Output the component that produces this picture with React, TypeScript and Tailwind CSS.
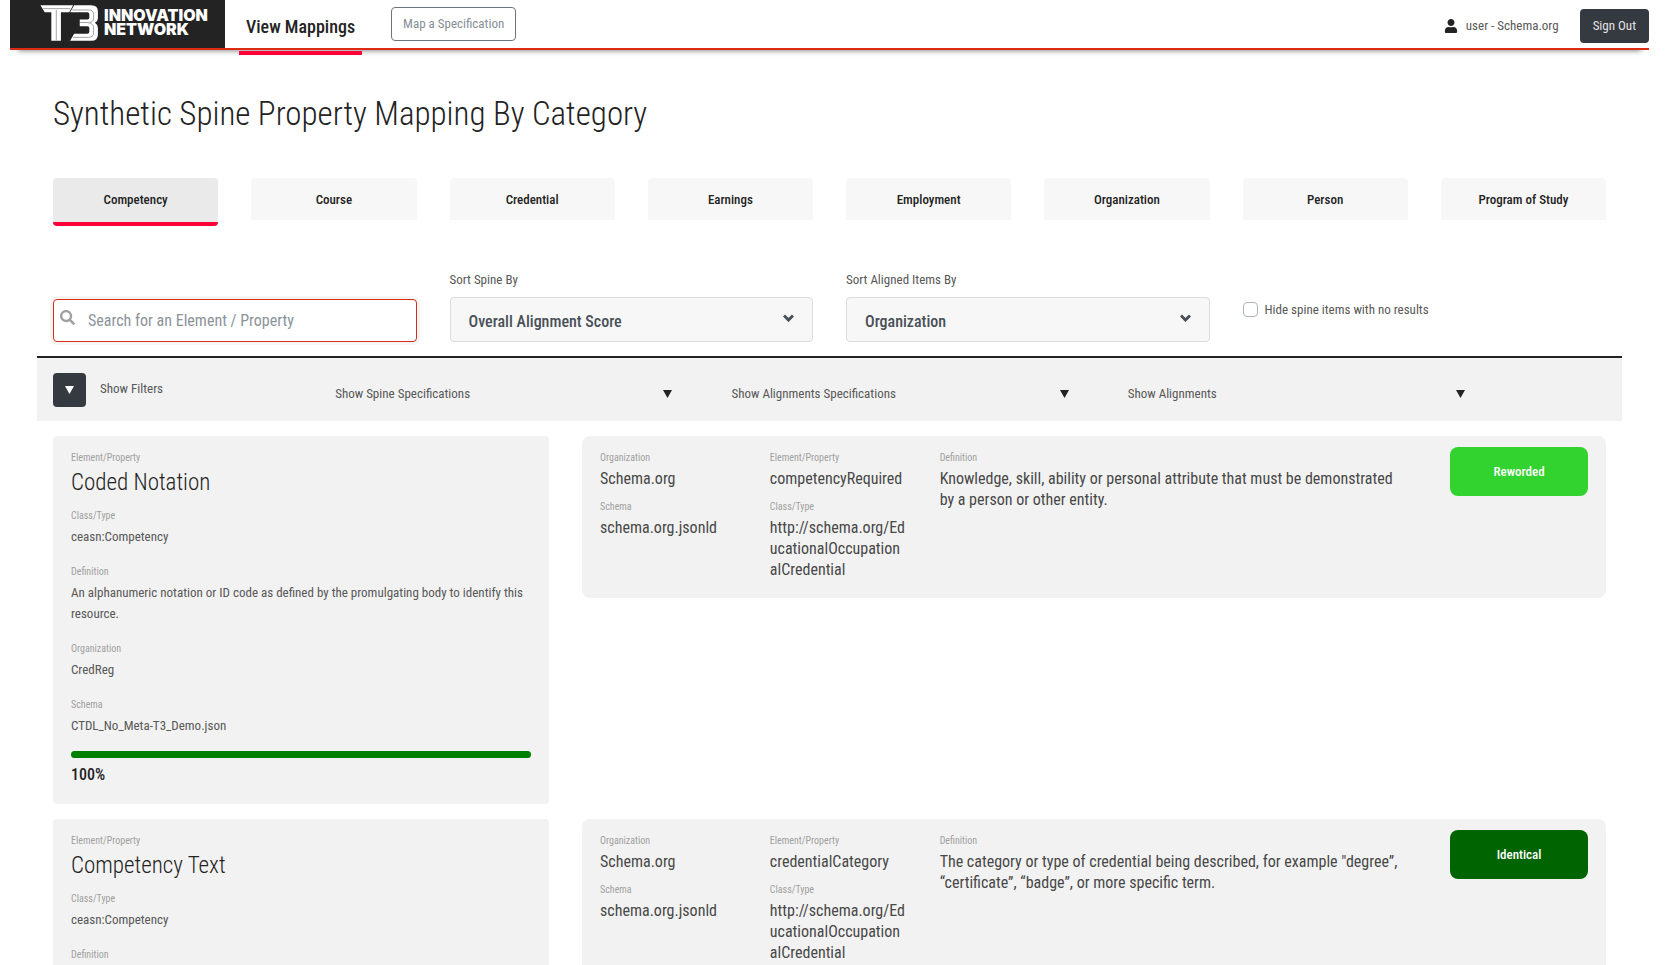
import { useState } from 'react';
import type { ReactNode } from 'react';
import { FaSearch, FaUser } from 'react-icons/fa';

const categories = [
  'Competency',
  'Course',
  'Credential',
  'Earnings',
  'Employment',
  'Organization',
  'Person',
  'Program of Study',
];

const filters = ['Show Spine Specifications', 'Show Alignments Specifications', 'Show Alignments'];

interface Alignment {
  organization: string;
  schema: string;
  property: string;
  classType: string;
  definition: string;
  predicate: string;
  color: string;
}

interface SpineTerm {
  name: string;
  classType: string;
  definition: string;
  organization: string;
  schema: string;
  score: number;
  alignments: Alignment[];
}

const spineTerms: SpineTerm[] = [
  {
    name: 'Coded Notation',
    classType: 'ceasn:Competency',
    definition:
      'An alphanumeric notation or ID code as defined by the promulgating body to identify this resource.',
    organization: 'CredReg',
    schema: 'CTDL_No_Meta-T3_Demo.json',
    score: 100,
    alignments: [
      {
        organization: 'Schema.org',
        schema: 'schema.org.jsonld',
        property: 'competencyRequired',
        classType: 'http://schema.org/EducationalOccupationalCredential',
        definition:
          'Knowledge, skill, ability or personal attribute that must be demonstrated by a person or other entity.',
        predicate: 'Reworded',
        color: 'bg-[#32d22f]',
      },
    ],
  },
  {
    name: 'Competency Text',
    classType: 'ceasn:Competency',
    definition: 'The text of the competency.',
    organization: 'CredReg',
    schema: 'CTDL_No_Meta-T3_Demo.json',
    score: 100,
    alignments: [
      {
        organization: 'Schema.org',
        schema: 'schema.org.jsonld',
        property: 'credentialCategory',
        classType: 'http://schema.org/EducationalOccupationalCredential',
        definition:
          'The category or type of credential being described, for example "degree”, “certificate”, “badge”, or more specific term.',
        predicate: 'Identical',
        color: 'bg-[#006400]',
      },
    ],
  },
];

const Logo = () => (
  <div className="flex w-[215px] items-start bg-[#232323] pt-[5px] pl-[30px] text-white">
    <svg viewBox="30 14 176 109" className="h-9 w-[59px]" aria-hidden="true">
      <path fill="#fff" d="M30 15H129L117 36H92V122H63V36H43Z" />
      <path
        fill="#fff"
        d="M132 15H184Q204 15 204 34V54Q204 63 195 68Q204 74 204 83V103Q204 122 184 122H120L132 101H172Q178 101 178 95V84Q178 78 172 78H149V58H172Q178 58 178 52V42Q178 36 172 36H120Z"
      />
      <path
        fill="none"
        stroke="#a3a3a3"
        strokeWidth="3"
        d="M38 25H120M78 29V122M126 29H176Q191 29 191 42V54Q191 67 176 67H150M176 68Q191 70 191 84V98Q191 112 176 112H128"
      />
    </svg>
    <p className="pt-[3px] pl-[5px] font-['Inter',sans-serif] text-[16px] leading-[14px] font-black">
      INNOVATION
      <br />
      NETWORK
    </p>
  </div>
);

const Header = () => (
  <header className="mr-[18px] ml-[10px] flex h-[50px] border-b-2 border-[#dd2a15] shadow-[0_8px_6px_-8px_rgba(0,0,0,0.6)]">
    <Logo />
    <nav className="flex items-start pl-[14px]">
      <a
        href="#mappings"
        className="h-[55px] border-b-4 border-[#ff0036] px-[7px] pt-3 text-[18px] leading-[30px] font-medium text-[#232323]"
      >
        View Mappings
      </a>
      <button className="mt-[7px] ml-[29px] h-[34px] rounded border border-[#6c757d] px-[11px] text-[13px] text-[#868e96]">
        Map a Specification
      </button>
    </nav>
    <div className="ml-auto flex items-start pt-[9px]">
      <span className="flex h-[34px] items-center text-[13px]">
        <FaUser className="mr-2 size-[14px] text-[#232323]" />
        user - Schema.org
      </span>
      <button className="ml-[21px] h-[34px] rounded bg-[#343a40] px-[13px] text-[13px] text-[#e4e4e4]">
        Sign Out
      </button>
    </div>
  </header>
);

const Triangle = () => (
  <svg viewBox="0 0 9 8" className="h-2 w-[9px]" fill="currentColor" aria-hidden="true">
    <path d="M0 0h9L4.500 8z" />
  </svg>
);

const Chevron = () => (
  <svg
    viewBox="0 0 11 8"
    className="pointer-events-none absolute top-[17px] right-[19px] h-2 w-[11px]"
    aria-hidden="true"
  >
    <path d="M1 1.500L5.500 6L10 1.500" fill="none" stroke="#495057" strokeWidth="3" />
  </svg>
);

const SortSelect = ({ id, label, options }: { id: string; label: string; options: string[] }) => (
  <div className="col-span-2">
    <label htmlFor={id} className="block text-[13px] leading-[21px]">
      {label}
    </label>
    <div className="relative mt-[7px]">
      <select
        id={id}
        className="block h-[45px] w-full appearance-none rounded border border-[#dcdcdc] bg-[#f7f7f7] px-[18px] pt-1 text-[16px] font-medium text-[#495057]"
      >
        {options.map((option) => (
          <option key={option}>{option}</option>
        ))}
      </select>
      <Chevron />
    </div>
  </div>
);

const Label = ({ children }: { children: ReactNode }) => (
  <p className="text-[10px] leading-[21px] text-[#a0a0a0]">{children}</p>
);

const SpineCard = ({ term }: { term: SpineTerm }) => (
  <div className="rounded bg-[#f2f2f2] px-[18px] pt-[11px] pb-[17px] text-[13px] leading-[21px]">
    <Label>Element/Property</Label>
    <h2 className="mb-[7px] text-[23px] leading-[30px] font-light text-[#232323]">{term.name}</h2>
    <Label>Class/Type</Label>
    <p className="mb-[14px]">{term.classType}</p>
    <Label>Definition</Label>
    <p className="mb-[14px]">{term.definition}</p>
    <Label>Organization</Label>
    <p className="mb-[14px]">{term.organization}</p>
    <Label>Schema</Label>
    <p className="mb-[15px]">{term.schema}</p>
    <div className="h-[7px] rounded bg-[#dddddd]">
      <div className="h-full rounded bg-[#008000]" style={{ width: `${term.score}%` }} />
    </div>
    <p className="mt-[5px] text-[16px] leading-6 font-medium text-[#232323]">{term.score}%</p>
  </div>
);

const AlignmentCard = ({ item }: { item: Alignment }) => (
  <div className="grid grid-cols-[170fr_170fr_511fr_138fr] rounded-lg bg-[#f2f2f2] pt-[11px] pr-[18px] pb-[18px] pl-[18px] text-[16px] leading-[21px] text-[#484848]">
    <div className="pr-[34px]">
      <Label>Organization</Label>
      <p className="mb-[7px]">{item.organization}</p>
      <Label>Schema</Label>
      <p>{item.schema}</p>
    </div>
    <div className="pr-[34px]">
      <Label>Element/Property</Label>
      <p className="mb-[7px]">{item.property}</p>
      <Label>Class/Type</Label>
      <p className="break-all">{item.classType}</p>
    </div>
    <div className="pr-11">
      <Label>Definition</Label>
      <p>{item.definition}</p>
    </div>
    <button
      className={`h-[49px] w-full rounded-lg text-[13px] font-medium text-white ${item.color}`}
    >
      {item.predicate}
    </button>
  </div>
);

const App = () => {
  const [category, setCategory] = useState('Competency');
  const [search, setSearch] = useState('');

  return (
    <div className="min-h-screen bg-white font-['Roboto_Condensed','Roboto',sans-serif] text-[#585858]">
      <Header />

      <main className="mr-[45px] ml-[37px]">
        <h1 className="px-4 pt-11 text-[33px] leading-10 font-light text-[#232323]">
          Synthetic Spine Property Mapping By Category
        </h1>

        <div className="mt-11 grid h-12 grid-cols-8 items-start gap-x-[33px] px-4">
          {categories.map((item) => (
            <button
              key={item}
              onClick={() => setCategory(item)}
              className={
                item === category
                  ? 'h-12 rounded border-b-4 border-[#ff0036] bg-[#eaeaea] text-[13px] font-medium text-[#232323]'
                  : 'h-[42px] rounded-t bg-[#f7f7f7] pt-[2px] text-[13px] font-medium text-[#232323]'
              }
            >
              {item}
            </button>
          ))}
        </div>

        <div className="mt-[43px] grid grid-cols-8 items-end gap-x-[33px] border-b-2 border-[#232323] px-4 pb-[14px]">
          <div className="relative col-span-2">
            <FaSearch className="absolute top-[11px] left-[7px] size-[15px] text-[#a0a0a0]" />
            <input
              type="text"
              aria-label="Search for an Element / Property"
              placeholder="Search for an Element / Property"
              value={search}
              onChange={(e) => setSearch(e.target.value)}
              autoFocus
              className="block h-[43px] w-full rounded border border-[#dd2a15] pr-3 pl-[34px] text-[16px] shadow-[0_0_0_3px_#f5f5f5] outline-none placeholder:text-[#8c949b]"
            />
          </div>
          <SortSelect
            id="sort-spine"
            label="Sort Spine By"
            options={['Overall Alignment Score', 'A-Z Property Name']}
          />
          <SortSelect
            id="sort-aligned"
            label="Sort Aligned Items By"
            options={['Organization', 'Type of Alignment']}
          />
          <label className="col-span-2 mb-[22px] flex items-center gap-[7px] text-[13px] leading-[21px]">
            <input
              type="checkbox"
              className="size-[15px] appearance-none rounded border border-[#adb5bd] bg-white checked:bg-[#343a40]"
            />
            Hide spine items with no results
          </label>
        </div>

        <div className="grid h-[63px] grid-cols-12 bg-[#f2f2f2] text-[13px]">
          <div className="col-span-2 flex items-start pt-[15px] pl-4">
            <button
              aria-label="Toggle filters"
              className="flex h-[34px] w-[33px] items-center justify-center rounded bg-[#343a40] text-white"
            >
              <Triangle />
            </button>
            <span className="pl-[14px] leading-[31px]">Show Filters</span>
          </div>
          <div className="col-span-9 -mr-4 ml-4 grid grid-cols-3 pt-[21px]">
            {filters.map((item) => (
              <button
                key={item}
                className="flex h-[30px] items-center justify-between pr-[41px] pl-[18px]"
              >
                {item}
                <span className="text-[#232323]">
                  <Triangle />
                </span>
              </button>
            ))}
          </div>
        </div>

        <div className="mt-[15px] flex flex-col gap-[15px] px-4">
          {spineTerms.map((term) => (
            <div key={term.name} className="grid grid-cols-[496fr_1024fr] items-start gap-x-[33px]">
              <SpineCard term={term} />
              <div className="flex flex-col gap-[15px]">
                {term.alignments.map((item) => (
                  <AlignmentCard key={item.property} item={item} />
                ))}
              </div>
            </div>
          ))}
        </div>
      </main>
    </div>
  );
};

export default App;
